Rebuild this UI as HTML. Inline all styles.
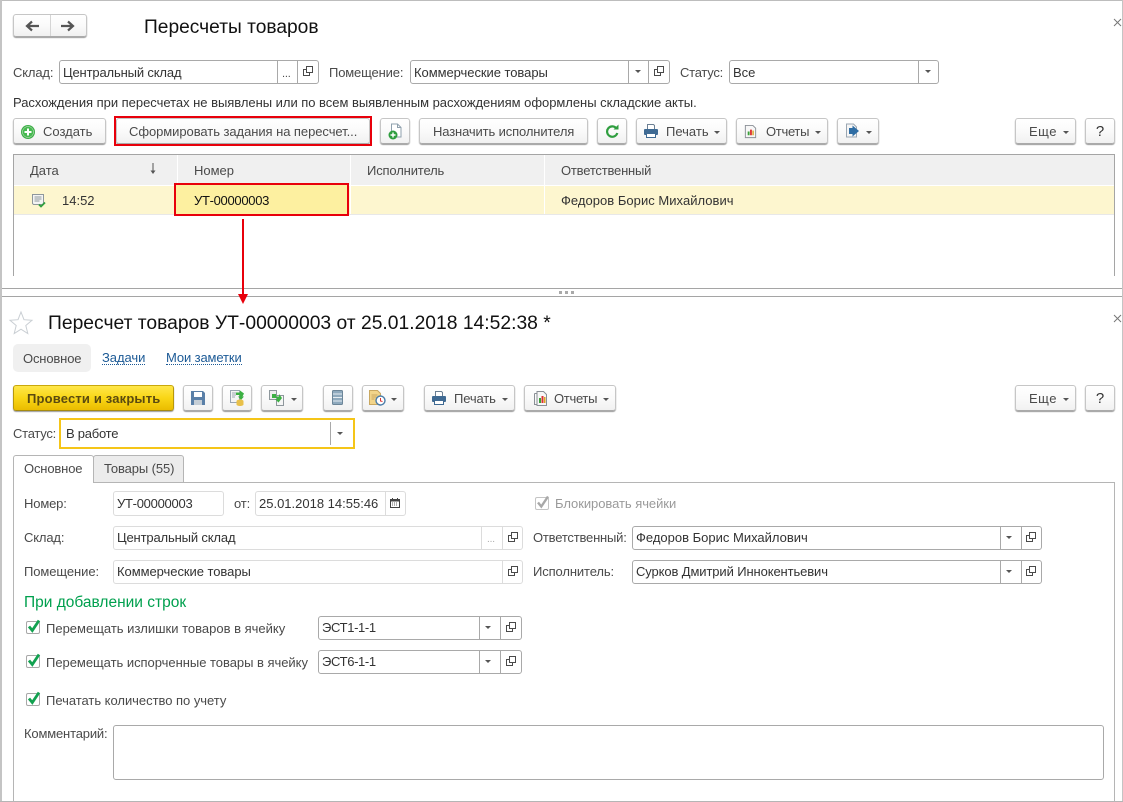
<!DOCTYPE html>
<html lang="ru"><head><meta charset="utf-8"><title>Пересчеты товаров</title>
<style>
html,body{margin:0;padding:0;background:#fff}
#p{position:relative;width:1123px;height:802px;overflow:hidden;background:#fff;font:13px/16px "Liberation Sans",Arial,sans-serif;color:#4a4a4a}
#p div,#p span,#p svg,#p a{position:absolute;box-sizing:border-box}
.t{white-space:nowrap;height:16px;margin-top:1px;letter-spacing:-.15px}
.z{letter-spacing:0}
.v{color:#333;letter-spacing:0}
.b{background:linear-gradient(#fff,#fafafa 50%,#f1f1f1);border:1px solid #c6c6c6;border-bottom-color:#aaa;border-radius:3px;box-shadow:0 1px 1px #9a9a9a;height:26px;color:#4a4a4a;text-align:left;line-height:26px;white-space:nowrap}
.f{background:#fff;border:1px solid #a9a9a9;border-radius:3px;height:24px}
.l{border-color:#dcdcdc}
.d{top:0;bottom:0;width:1px;background:#a9a9a9}
.l .d{background:#dcdcdc}
.ar{width:6px;height:3px;border:3px solid transparent;border-top:3px solid #555;border-bottom:0}
.h{background:#f0f0f0;top:155px;height:30px}
svg{overflow:visible}
</style></head><body><div id="p">
<svg width="0" height="0" style="left:0;top:0"><defs>
<symbol id="open" viewBox="0 0 12 12"><path d="M4.500 1.500h6v6h-6z" fill="#fff" stroke="#4a4a4a"/><path d="M4.500 4.500H1.500v6h6V7.500" fill="none" stroke="#4a4a4a"/></symbol>
<symbol id="print" viewBox="0 0 16 16"><path d="M4.500 1.500h6l1 1v4h-7z" fill="#fff" stroke="#6b7f93"/><rect x="1" y="6" width="14" height="6" rx="1" fill="#3f6a93"/><rect x="3.500" y="10.500" width="9" height="4" fill="#fff" stroke="#3f6a93"/></symbol>
<symbol id="rep" viewBox="0 0 16 16"><path d="M2.500 1.500h8l3 3v10h-11z" fill="#f7f7f7" stroke="#8a8f96"/><rect x="5" y="8" width="2" height="4" fill="#3aa13a"/><rect x="7.500" y="6" width="2" height="6" fill="#d33"/><rect x="10" y="7" width="1.500" height="5" fill="#d9a520"/></symbol>
<symbol id="cb" viewBox="0 0 16 15"><rect x="1.500" y="2.500" width="13" height="12" rx="1.500" fill="#fff" stroke="#a8a8a8"/><path d="M4 7.500l3.300 4L14 1.500" fill="none" stroke="#12a150" stroke-width="2.800"/></symbol>
</defs></svg>

<!-- window frame -->
<div style="left:0;top:0;width:1123px;height:1px;background:#bdbdbd"></div>
<div style="left:0;top:0;width:2px;height:802px;background:#c4c4c4"></div>
<div style="left:1122px;top:0;width:1px;height:802px;background:#c4c4c4"></div>
<div style="left:0;top:801px;width:1123px;height:1px;background:#b5b5b5"></div>

<!-- top form header -->
<div class="b" style="left:13px;top:14px;width:74px;height:23px"></div>
<div style="left:50px;top:15px;width:1px;height:21px;background:#d5d5d5"></div>
<svg style="left:25px;top:20px" width="15" height="12" viewBox="0 0 15 12"><path d="M14 6H3M7 1.500L2 6l5 4.500" fill="none" stroke="#555" stroke-width="2.200"/></svg>
<svg style="left:60px;top:20px" width="15" height="12" viewBox="0 0 15 12"><path d="M1 6h11M8 1.500L13 6l-5 4.500" fill="none" stroke="#555" stroke-width="2.200"/></svg>
<span class="t z" style="left:144px;top:16px;height:22px;font-size:19.200px;line-height:22px;color:#111">Пересчеты товаров</span>
<svg style="left:1113px;top:18px" width="9" height="9"><path d="M1 1l7 7M8 1L1 8" stroke="#777" fill="none"/></svg>

<!-- filter row -->
<span class="t" style="left:13px;top:64px">Склад:</span>
<div class="f" style="left:59px;top:60px;width:260px"><div class="d" style="left:217px"></div><div class="d" style="left:237px"></div></div>
<span class="t v" style="left:63px;top:64px;letter-spacing:-.15px">Центральный склад</span>
<span class="t" style="left:282px;top:65px;font-size:11px">...</span>
<svg style="left:302px;top:65px" width="12" height="12"><use href="#open"/></svg>
<span class="t" style="left:329px;top:64px">Помещение:</span>
<div class="f" style="left:410px;top:60px;width:260px"><div class="d" style="left:217px"></div><div class="d" style="left:237px"></div></div>
<span class="t v" style="left:414px;top:64px;letter-spacing:-.05px">Коммерческие товары</span>
<div class="ar" style="left:635px;top:70px"></div>
<svg style="left:653px;top:65px" width="12" height="12"><use href="#open"/></svg>
<span class="t" style="left:680px;top:64px;letter-spacing:-.25px">Статус:</span>
<div class="f" style="left:729px;top:60px;width:210px"><div class="d" style="left:188px"></div></div>
<span class="t v" style="left:733px;top:64px">Все</span>
<div class="ar" style="left:925px;top:70px"></div>

<span class="t v" style="left:13px;top:94px;letter-spacing:-.03px">Расхождения при пересчетах не выявлены или по всем выявленным расхождениям оформлены складские акты.</span>

<!-- top command bar -->
<div class="b" style="left:13px;top:118px;width:93px;padding-left:29px">Создать</div>
<svg style="left:21px;top:125px" width="14" height="14"><circle cx="7" cy="7" r="7" fill="#3fae49"/><circle cx="7" cy="7" r="5.500" fill="#46b94f" stroke="#d8f0d8" stroke-width=".5"/><path d="M7 3.500v7M3.500 7h7" stroke="#fff" stroke-width="2"/></svg>
<div class="b" style="left:116px;top:118px;width:254px;padding-left:12px;letter-spacing:-.06px">Сформировать задания на пересчет...</div>
<div style="left:114px;top:116px;width:258px;height:30px;border:2px solid #e8000b"></div>
<div class="b" style="left:380px;top:118px;width:30px"></div>
<svg style="left:388px;top:123px" width="15" height="17" viewBox="0 0 15 17"><path d="M3.500 1h6l3.500 3.500V14h-9.500z" fill="#fff" stroke="#8fa0ad"/><path d="M9.500 1v3.500H13" fill="none" stroke="#8fa0ad"/><circle cx="5" cy="12" r="4.500" fill="#2f9e3f"/><path d="M5 9.500v5M2.500 12h5" stroke="#fff" stroke-width="1.400"/></svg>
<div class="b" style="left:419px;top:118px;width:169px;padding-left:13px;letter-spacing:-.13px">Назначить исполнителя</div>
<div class="b" style="left:597px;top:118px;width:30px"></div>
<svg style="left:605px;top:124px" width="14" height="15" viewBox="0 0 14 15"><path d="M11.500 4.500A5.200 5.200 0 1 0 12.300 9" fill="none" stroke="#2f9e3f" stroke-width="2.200"/><path d="M8.500 5.500h5v-5z" fill="#2f9e3f"/></svg>
<div class="b" style="left:636px;top:118px;width:91px;padding-left:29px">Печать</div>
<svg style="left:643px;top:123px" width="16" height="16"><use href="#print"/></svg>
<div class="ar" style="left:714px;top:131px"></div>
<div class="b" style="left:736px;top:118px;width:92px;padding-left:29px;letter-spacing:-.3px">Отчеты</div>
<svg style="left:743px;top:124px" width="15" height="15"><use href="#rep"/></svg>
<div class="ar" style="left:815px;top:131px"></div>
<div class="b" style="left:837px;top:118px;width:42px"></div>
<svg style="left:845px;top:123px" width="15" height="16" viewBox="0 0 15 16"><path d="M1.500 1h7l3 3v10h-10z" fill="#f5f5f5" stroke="#9aa6b2"/><path d="M4 5h3.500V2.500L14 8l-6.500 5.500V11H4z" fill="#2e6da4"/></svg>
<div class="ar" style="left:866px;top:131px"></div>
<div class="b" style="left:1015px;top:118px;width:61px;padding-left:13px;letter-spacing:.5px">Еще</div>
<div class="ar" style="left:1063px;top:131px"></div>
<div class="b" style="left:1085px;top:118px;width:30px;font-size:15px;color:#333;text-align:center">?</div>

<!-- table -->
<div style="left:13px;top:154px;width:1101px;height:1px;background:#a5a5a5"></div>
<div style="left:13px;top:154px;width:1px;height:122px;background:#a5a5a5"></div>
<div style="left:1114px;top:154px;width:1px;height:122px;background:#a5a5a5"></div>
<div class="h" style="left:14px;width:163px"></div>
<div class="h" style="left:178px;width:172px"></div>
<div class="h" style="left:351px;width:193px"></div>
<div class="h" style="left:545px;width:569px"></div>
<span class="t z" style="left:30px;top:162px">Дата</span>
<svg style="left:150px;top:163px" width="6" height="12"><path d="M3 0v9" stroke="#555"/><path d="M.5 7.500h5L3 11z" fill="#555"/></svg>
<span class="t z" style="left:194px;top:162px">Номер</span>
<span class="t" style="left:367px;top:162px">Исполнитель</span>
<span class="t" style="left:561px;top:162px;letter-spacing:-.2px">Ответственный</span>
<div style="left:14px;top:186px;width:1100px;height:28px;background:#fdf6cf"></div>
<div style="left:350px;top:186px;width:1px;height:28px;background:#fff"></div>
<div style="left:544px;top:186px;width:1px;height:28px;background:#fff"></div>
<div style="left:14px;top:214px;width:1100px;height:1px;background:#e8e8e8"></div>
<div style="left:175px;top:185px;width:173px;height:29px;background:#fdf0a0"></div>
<svg style="left:31px;top:194px" width="16" height="14" viewBox="0 0 16 14"><path d="M1.500 .5h11v9l-1 1h-9l-1-1z" fill="#f4f4f4" stroke="#8e979c"/><path d="M3.500 3h7M3.500 5h7M3.500 7h5" stroke="#8e979c"/><path d="M8 10.500l2 2 4-4" fill="none" stroke="#2f9e3f" stroke-width="1.800"/></svg>
<span class="t v" style="left:62px;top:192px">14:52</span>
<span class="t" style="left:194px;top:192px;color:#111;letter-spacing:-.3px">УТ-00000003</span>
<span class="t v" style="left:561px;top:192px;letter-spacing:.03px">Федоров Борис Михайлович</span>
<div style="left:174px;top:183px;width:175px;height:33px;border:2px solid #e8000b"></div>

<!-- splitter -->
<div style="left:2px;top:288px;width:1120px;height:1px;background:#a5a5a5"></div>
<div style="left:2px;top:296px;width:1120px;height:1px;background:#a5a5a5"></div>
<div style="left:559px;top:291px;width:3px;height:3px;background:#a9a9a9"></div>
<div style="left:565px;top:291px;width:3px;height:3px;background:#a9a9a9"></div>
<div style="left:571px;top:291px;width:3px;height:3px;background:#a9a9a9"></div>
<!-- red arrow -->
<div style="left:242px;top:219px;width:2px;height:76px;background:#e8000b"></div>
<svg style="left:238px;top:294px" width="10" height="10"><path d="M0 0h10L5 10z" fill="#e8000b"/></svg>

<!-- lower form header -->
<svg style="left:9px;top:311px" width="24" height="23" viewBox="0 0 24 23"><path d="M12 1l3 7.700 8 .6-6.200 5.200 2 8-6.800-4.300-6.800 4.300 2-8L1 9.300l8-.6z" fill="#fff" stroke="#c9ced3"/></svg>
<span class="t z" style="left:48px;top:312px;height:22px;font-size:19.300px;line-height:22px;color:#111">Пересчет товаров УТ-00000003 от 25.01.2018 14:52:38 *</span>
<svg style="left:1113px;top:314px" width="9" height="9"><path d="M1 1l7 7M8 1L1 8" stroke="#777" fill="none"/></svg>

<div style="left:13px;top:344px;width:78px;height:28px;background:#f0f0f0;border-radius:5px"></div>
<span class="t" style="left:23px;top:350px">Основное</span>
<span class="t" style="left:102px;top:349px;color:#1c5a96;border-bottom:1px dotted #1c5a96;height:15px;letter-spacing:-.05px">Задачи</span>
<span class="t" style="left:166px;top:349px;color:#1c5a96;border-bottom:1px dotted #1c5a96;height:15px;letter-spacing:-.12px">Мои заметки</span>

<!-- lower command bar -->
<div class="b" style="left:13px;top:385px;width:161px;padding-left:13px;background:linear-gradient(#ffe74a,#f9d616 50%,#eabc00);border-color:#c9a80c #b8980a #a58a10;font-weight:bold;color:#5a4a10;letter-spacing:.17px">Провести и закрыть</div>
<div class="b" style="left:183px;top:385px;width:30px"></div>
<svg style="left:191px;top:391px" width="14" height="14" viewBox="0 0 14 14"><path d="M0 0h12l2 2v12H0z" fill="#5a80a8"/><rect x="3" y="1" width="8" height="5" fill="#fff"/><rect x="3" y="9" width="8" height="5" fill="#c5ced6"/></svg>
<div class="b" style="left:222px;top:385px;width:30px"></div>
<svg style="left:229px;top:390px" width="16" height="16" viewBox="0 0 16 16"><path d="M1.500 .5h9v12h-9z" fill="#f5f5f5" stroke="#9aa6b2"/><path d="M3 3h5M3 5h4M3 7h3" stroke="#9aa6b2"/><path d="M7 2.500h4V.5l4 3-1.500 3H15L12 10 9 6.500h1.500V5H7z" fill="#3cb043"/><ellipse cx="11" cy="11" rx="3.500" ry="1.500" fill="#e8c04a"/><path d="M7.500 11v3.500c0 .8 1.600 1.500 3.500 1.500s3.500-.7 3.500-1.500V11" fill="#e8c04a"/></svg>
<div class="b" style="left:261px;top:385px;width:42px"></div>
<svg style="left:268px;top:390px" width="17" height="16" viewBox="0 0 17 16"><path d="M1.500 .5h7v9h-7z" fill="#eee" stroke="#8e979c"/><path d="M8.500 5.500h7v10h-7z" fill="#f5f5f5" stroke="#8e979c"/><path d="M4 4l4 0v2.500h3V4l3 4-3.500 4.500L7 9h2V8H4z" fill="#3cb043"/></svg>
<div class="ar" style="left:291px;top:398px"></div>
<div class="b" style="left:323px;top:385px;width:30px"></div>
<svg style="left:332px;top:390px" width="11" height="15" viewBox="0 0 11 15"><rect x=".5" y=".5" width="10" height="14" rx="1" fill="#8ea9bd" stroke="#6c8598"/><path d="M1 4h9M1 7.500h9M1 11h9" stroke="#e6edf2"/></svg>
<div class="b" style="left:362px;top:385px;width:42px"></div>
<svg style="left:369px;top:390px" width="17" height="16" viewBox="0 0 17 16"><path d="M.5.500h8l3 3v11H.5z" fill="#f2d58a" stroke="#c9a860"/><path d="M2.500 5h6M2.500 7h5M2.500 9h3" stroke="#c9a860"/><circle cx="11.500" cy="10.500" r="4.500" fill="#fff" stroke="#4a7ca8" stroke-width="1.400"/><path d="M11.500 8v3l2 .5" stroke="#d33" fill="none"/></svg>
<div class="ar" style="left:391px;top:398px"></div>
<div class="b" style="left:424px;top:385px;width:91px;padding-left:29px;letter-spacing:-.15px">Печать</div>
<svg style="left:431px;top:390px" width="16" height="16"><use href="#print"/></svg>
<div class="ar" style="left:502px;top:398px"></div>
<div class="b" style="left:524px;top:385px;width:92px;padding-left:29px;letter-spacing:-.3px">Отчеты</div>
<svg style="left:534px;top:390px" width="14" height="16" viewBox="0 0 14 16"><path d="M.5 3.500h2M.5 3.500v11h3" fill="none" stroke="#8a8f96"/><path d="M3 1.500h6.500l3 3v11H3z" fill="#f7f7f7" stroke="#8a8f96"/><rect x="5" y="8" width="2" height="5" fill="#3aa13a"/><rect x="7.500" y="6" width="2" height="7" fill="#d33"/><rect x="10" y="7" width="1.500" height="6" fill="#d9a520"/></svg>
<div class="ar" style="left:603px;top:398px"></div>
<div class="b" style="left:1015px;top:385px;width:61px;padding-left:13px;letter-spacing:.5px">Еще</div>
<div class="ar" style="left:1063px;top:398px"></div>
<div class="b" style="left:1085px;top:385px;width:30px;font-size:15px;color:#333;text-align:center">?</div>

<!-- status -->
<span class="t" style="left:13px;top:425px;letter-spacing:-.25px">Статус:</span>
<div style="left:59px;top:418px;width:296px;height:31px;border:2px solid #f5c518;background:#fff"></div>
<div style="left:330px;top:422px;width:1px;height:23px;background:#a9a9a9"></div>
<span class="t v" style="left:66px;top:425px;letter-spacing:-.25px">В работе</span>
<div class="ar" style="left:337px;top:432px"></div>

<!-- tabs -->
<div style="left:13px;top:482px;width:1102px;height:320px;border:1px solid #b5b5b5;border-bottom:0"></div>
<div style="left:93px;top:455px;width:91px;height:28px;background:#ececec;border:1px solid #b5b5b5;border-radius:3px 3px 0 0"></div>
<div style="left:13px;top:455px;width:81px;height:28px;background:#fff;border:1px solid #b5b5b5;border-bottom:0;border-radius:3px 3px 0 0"></div>
<span class="t" style="left:24px;top:460px">Основное</span>
<span class="t" style="left:104px;top:460px;letter-spacing:-.1px">Товары (55)</span>

<!-- form: left -->
<span class="t" style="left:24px;top:495px">Номер:</span>
<div class="f l" style="left:113px;top:491px;width:111px;height:25px"></div>
<span class="t v" style="left:117px;top:495px;letter-spacing:-.27px">УТ-00000003</span>
<span class="t" style="left:234px;top:495px">от:</span>
<div class="f l" style="left:255px;top:491px;width:151px;height:25px"><div class="d" style="left:129px"></div></div>
<span class="t v" style="left:259px;top:495px">25.01.2018 14:55:46</span>
<svg style="left:390px;top:498px" width="10" height="10" viewBox="0 0 10 10"><path d="M.5 1.500h9v8h-9z" fill="#fff" stroke="#444"/><path d="M0 2h10v1.500H0zM2 0h1v2H2zM7 0h1v2H7z" fill="#444"/><path d="M2 5h6M2 7h6" stroke="#666" stroke-dasharray="1 1"/></svg>

<span class="t" style="left:24px;top:529px">Склад:</span>
<div class="f l" style="left:113px;top:526px;width:410px"><div class="d" style="left:367px"></div><div class="d" style="left:388px"></div></div>
<span class="t v" style="left:117px;top:529px;letter-spacing:-.15px">Центральный склад</span>
<span class="t" style="left:487px;top:531px;font-size:10px;color:#aaa">...</span>
<svg style="left:507px;top:531px" width="12" height="12"><use href="#open"/></svg>

<span class="t" style="left:24px;top:563px;letter-spacing:-.08px">Помещение:</span>
<div class="f l" style="left:113px;top:560px;width:410px"><div class="d" style="left:388px"></div></div>
<span class="t v" style="left:117px;top:563px;letter-spacing:-.05px">Коммерческие товары</span>
<svg style="left:507px;top:565px" width="12" height="12"><use href="#open"/></svg>

<span class="t z" style="left:24px;top:593px;height:18px;font-size:15.500px;line-height:18px;color:#00a04e">При добавлении строк</span>

<svg style="left:25px;top:619px" width="16" height="15"><use href="#cb"/></svg>
<span class="t z" style="left:46px;top:620px">Перемещать излишки товаров в ячейку</span>
<div class="f" style="left:318px;top:616px;width:204px"><div class="d" style="left:160px"></div><div class="d" style="left:181px"></div></div>
<span class="t v" style="left:322px;top:619px;letter-spacing:-.35px">ЭСТ1-1-1</span>
<div class="ar" style="left:485px;top:626px"></div>
<svg style="left:505px;top:621px" width="12" height="12"><use href="#open"/></svg>

<svg style="left:25px;top:653px" width="16" height="15"><use href="#cb"/></svg>
<span class="t" style="left:46px;top:654px;letter-spacing:-.03px">Перемещать испорченные товары в ячейку</span>
<div class="f" style="left:318px;top:650px;width:204px"><div class="d" style="left:160px"></div><div class="d" style="left:181px"></div></div>
<span class="t v" style="left:322px;top:653px;letter-spacing:-.35px">ЭСТ6-1-1</span>
<div class="ar" style="left:485px;top:660px"></div>
<svg style="left:505px;top:655px" width="12" height="12"><use href="#open"/></svg>

<svg style="left:25px;top:691px" width="16" height="15"><use href="#cb"/></svg>
<span class="t" style="left:46px;top:692px;letter-spacing:-.03px">Печатать количество по учету</span>

<span class="t" style="left:24px;top:725px;letter-spacing:-.17px">Комментарий:</span>
<div class="f" style="left:113px;top:725px;width:991px;height:55px"></div>

<!-- form: right -->
<svg style="left:534px;top:495px" width="16" height="15" viewBox="0 0 16 15"><rect x="1.500" y="2.500" width="13" height="12" rx="1.500" fill="#fff" stroke="#c4c4c4"/><path d="M4 7.500l3.300 4L14 1.500" fill="none" stroke="#a8a8a8" stroke-width="2.400"/></svg>
<span class="t" style="left:555px;top:495px;color:#9a9a9a;letter-spacing:-.05px">Блокировать ячейки</span>
<span class="t" style="left:533px;top:529px;letter-spacing:-.2px">Ответственный:</span>
<div class="f" style="left:632px;top:526px;width:410px"><div class="d" style="left:367px"></div><div class="d" style="left:388px"></div></div>
<span class="t v" style="left:636px;top:529px">Федоров Борис Михайлович</span>
<div class="ar" style="left:1006px;top:536px"></div>
<svg style="left:1025px;top:531px" width="12" height="12"><use href="#open"/></svg>
<span class="t" style="left:533px;top:563px;letter-spacing:-.12px">Исполнитель:</span>
<div class="f" style="left:632px;top:560px;width:410px"><div class="d" style="left:367px"></div><div class="d" style="left:388px"></div></div>
<span class="t v" style="left:636px;top:563px;letter-spacing:-.11px">Сурков Дмитрий Иннокентьевич</span>
<div class="ar" style="left:1006px;top:570px"></div>
<svg style="left:1025px;top:565px" width="12" height="12"><use href="#open"/></svg>
</div></body></html>
